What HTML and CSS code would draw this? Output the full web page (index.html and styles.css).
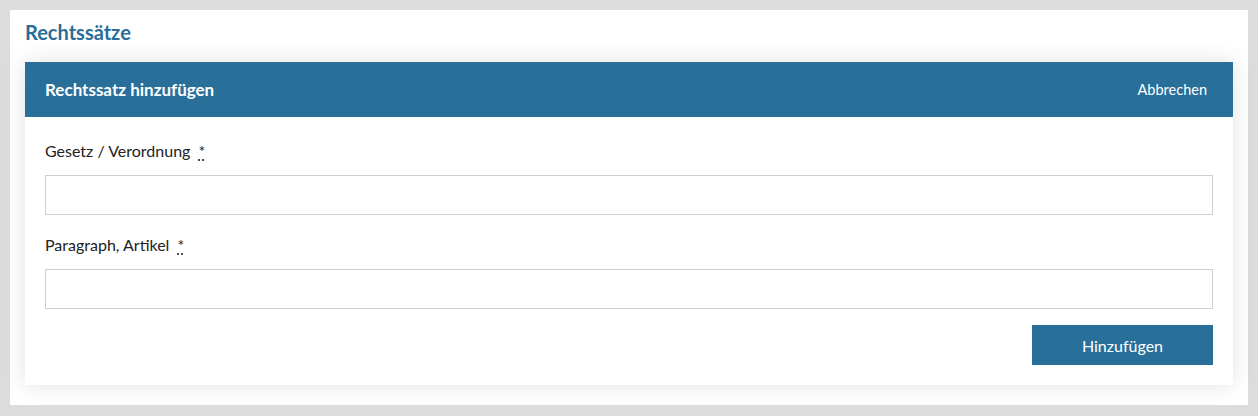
FILE: index.html
```html
<!DOCTYPE html>
<html lang="de">
<head>
  <meta charset="UTF-8">
  <title>Rechtssätze</title>
  <link rel="stylesheet" href="styles.css">
</head>
<body>
  <div class="panel">
    <h2 class="panel-title">Rechtssätze</h2>

    <!-- Add form card -->
    <div class="card">
      <div class="card-header">
        <span class="card-title">Rechtssatz hinzufügen</span>
        <a class="cancel" href="#">Abbrechen</a>
      </div>
      <form class="card-body">
        <label for="gesetz">Gesetz / Verordnung <abbr title="Pflichtfeld">*</abbr></label>
        <input type="text" id="gesetz">

        <label for="paragraph">Paragraph, Artikel <abbr title="Pflichtfeld">*</abbr></label>
        <input type="text" id="paragraph">

        <div class="actions">
          <button type="button">Hinzufügen</button>
        </div>
      </form>
    </div>
  </div>
</body>
</html>
```

FILE: styles.css
```css
body {
  margin: 0;
  padding: 10px;
  background: #dcdcdc;
  font-family: Lato, "Open Sans", sans-serif;
  color: #222;
}

.panel {
  background: #fff;
  padding: 10px 15px 20px;
}

.panel-title {
  margin: 0 0 18px;
  font-size: 20px;
  line-height: 24px;
  font-weight: bold;
  color: #2a6d98;
}

.card {
  background: #fff;
  box-shadow: 0 0 22px rgba(0, 0, 0, 0.12);
}

.card-header {
  display: flex;
  justify-content: space-between;
  align-items: center;
  height: 55px;
  padding: 0 26px 0 20px;
  background: #286f9a;
  color: #fff;
}

.card-title {
  font-size: 17px;
  font-weight: bold;
}

.cancel {
  color: #fff;
  font-size: 14.5px;
  text-decoration: none;
}

.card-body {
  display: flex;
  flex-direction: column;
  padding: 24px 20px 20px;
}

label {
  font-size: 16px;
  line-height: 20px;
  margin-bottom: 14px;
}

/* required marker: raised asterisk with dotted underline at baseline */
abbr {
  margin-left: 4px;
  text-decoration: underline dotted;
  text-underline-offset: 3px;
  cursor: help;
}

input {
  height: 40px;
  box-sizing: border-box;
  border: 1px solid #ccd0d5;
  margin: 0 0 20px;
  padding: 0 10px;
  font: inherit;
}

.actions {
  display: flex;
  justify-content: flex-end;
  margin-top: -4px;
}

button {
  width: 181px;
  height: 40px;
  border: none;
  background: #286f9a;
  color: #fff;
  font-family: inherit;
  font-size: 16px;
  cursor: pointer;
}
```
